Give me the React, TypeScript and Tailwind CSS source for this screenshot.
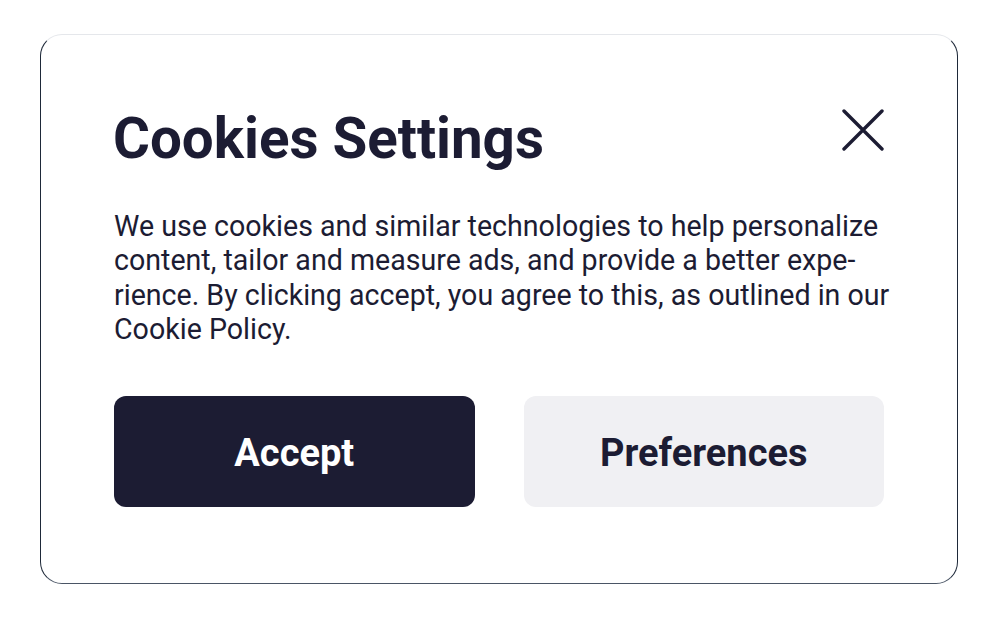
import React from 'react';

const App = () => {
  return (
    <div className="min-h-screen w-full bg-white pt-[34px] pl-[40px]" style={{ fontFamily: 'Roboto, "Liberation Sans", sans-serif' }}>
      {/* Dialog card */}
      <div className="w-[918px] h-[550px] rounded-[22px] bg-white border border-t-gray-200 border-l-gray-800 border-r-gray-800 border-b-gray-600 px-[73px] pt-[64px]">
        <div className="flex items-start justify-between">
          <h1 className="text-[56.5px] leading-[80px] font-bold text-[#1c1c33] -ml-[1px]">Cookies Settings</h1>
          <button className="mt-[10px] w-[42px] h-[42px] flex items-center justify-center">
            <svg width="42" height="42" viewBox="0 0 42 42" fill="none">
              <path d="M2 2 L40 40 M40 2 L2 40" stroke="#1c1c33" strokeWidth="3.4" strokeLinecap="round" />
            </svg>
          </button>
        </div>
        <p className="mt-[30px] w-[790px] text-[28.6px] leading-[34.3px] text-[#1c1c33]">
          We use cookies and similar technologies to help personalize content, tailor and measure ads, and provide a better expe{'\u00AD'}rience. By clicking accept, you agree to this, as outlined in our Cookie Policy.
        </p>
        <div className="mt-[50px] flex gap-[49px]">
          <button className="w-[361px] h-[111px] pt-[3px] rounded-[12px] bg-[#1c1c33] text-white text-[38px] font-bold">Accept</button>
          <button className="w-[361px] h-[111px] pt-[3px] rounded-[12px] bg-[#f0f0f3] text-[#1c1c33] text-[38px] font-bold">Preferences</button>
        </div>
      </div>
    </div>
  );
};

export default App;
